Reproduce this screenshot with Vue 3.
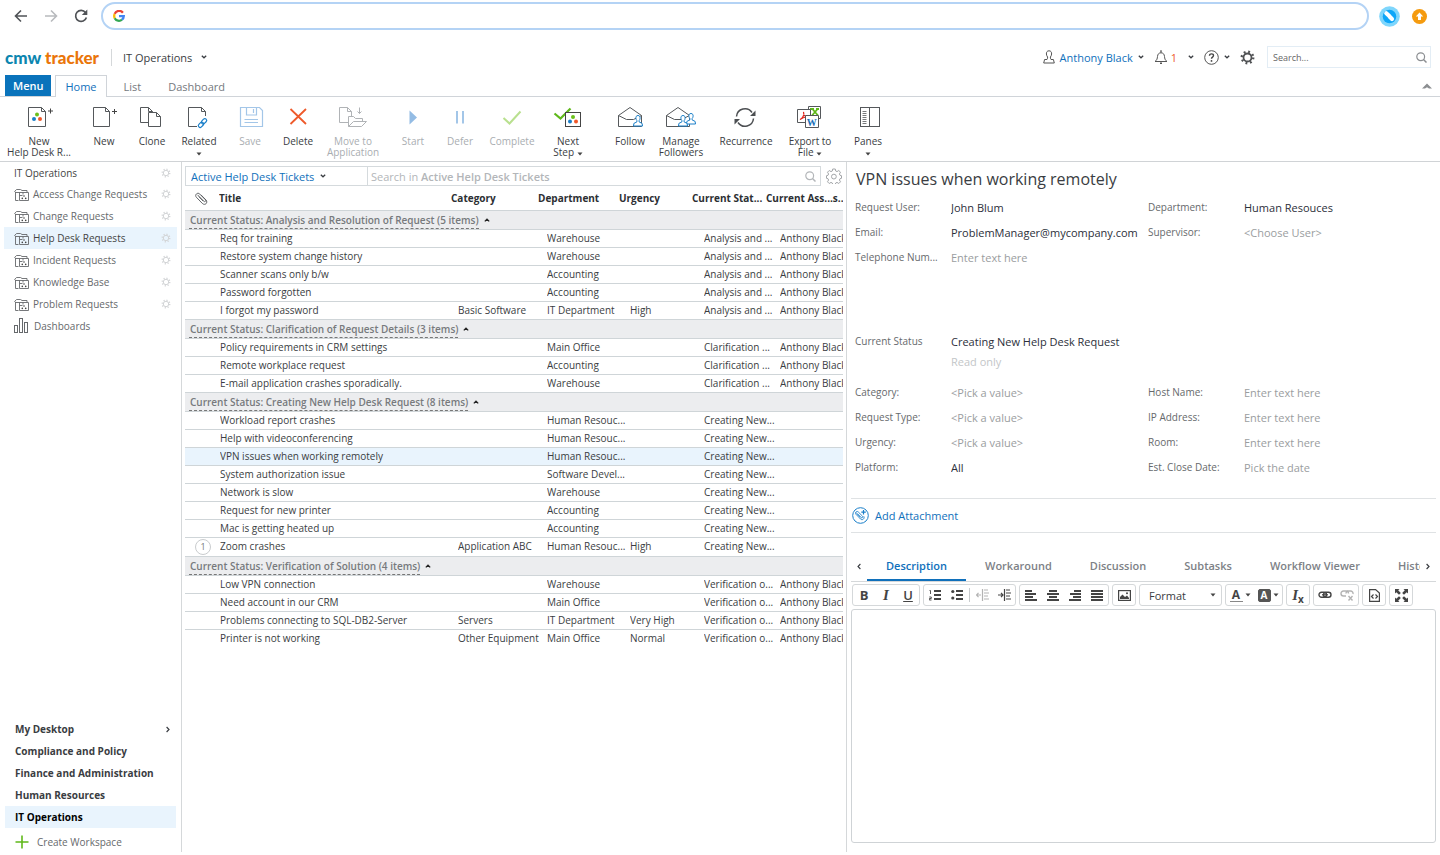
<template>
  <div class="page">
    <!-- Browser bar -->
    <div class="browser">
      <button class="plain nav" aria-label="Back"><Icon name="back" /></button>
      <button class="plain nav muted" aria-label="Forward"><Icon name="forward" /></button>
      <button class="plain nav" aria-label="Reload"><Icon name="reload" /></button>
      <div class="address">
        <Icon name="google" />
        <input v-model="address" type="text" aria-label="Address" />
      </div>
      <button class="plain ext" aria-label="Extension"><Icon name="extension" /></button>
      <button class="plain ext" aria-label="Update"><Icon name="update" /></button>
    </div>

    <!-- Header -->
    <header class="header">
      <a href="#" class="logo"><span class="logo-cmw">cmw</span> <span class="logo-tracker">tracker</span></a>
      <button class="plain workspace-menu">IT Operations <Icon name="down" /></button>
      <div class="account">
        <button class="plain user"><Icon name="user" /><span>Anthony Black</span><Icon name="down" /></button>
        <button class="plain bell"><Icon name="bell" /><span>1</span><Icon name="down" /></button>
        <button class="plain help" aria-label="Help"><Icon name="help" /><Icon name="down" /></button>
        <button class="plain settings" aria-label="Settings"><Icon name="gearDark" /></button>
        <div class="global-search">
          <input v-model="search" type="text" placeholder="Search..." aria-label="Search" />
          <Icon name="search" />
        </div>
      </div>
    </header>

    <nav class="tabs">
      <button class="plain tab-menu">Menu</button>
      <button
        v-for="tab in mainTabs"
        :key="tab"
        class="plain tab"
        :class="{ active: tab === activeTab }"
        @click="activeTab = tab"
      >{{ tab }}</button>
      <button class="plain collapse" aria-label="Collapse"><Icon name="collapse" /></button>
    </nav>

    <!-- Ribbon -->
    <div class="ribbon">
      <button v-for="item in ribbon" :key="item.icon" class="plain ribbon-item" :disabled="item.disabled">
        <Icon :name="item.icon" />
        <span>{{ item.label }}</span>
        <span v-if="item.label2 || item.arrow">{{ item.label2 }} <Icon v-if="item.arrow" name="caret" /></span>
      </button>
    </div>

    <div class="body">
      <!-- Sidebar -->
      <aside class="sidebar">
        <div class="side-list">
          <div class="side-row root">
            <a href="#">IT Operations</a>
            <Icon name="gearLight" />
          </div>
          <div v-for="app in apps" :key="app" class="side-row" :class="{ selected: app === 'Help Desk Requests' }">
            <a href="#"><Icon name="folder" />{{ app }}</a>
            <Icon name="gearLight" />
          </div>
          <div class="side-row dash">
            <a href="#"><Icon name="bars" />Dashboards</a>
          </div>
        </div>
        <div class="workspaces">
          <a v-for="(w, index) in workspaces" :key="w" href="#" :class="{ selected: w === 'IT Operations' }">
            {{ w }} <Icon v-if="index === 0" name="right" />
          </a>
          <button class="plain create"><Icon name="plus" />Create Workspace</button>
        </div>
      </aside>

      <!-- Ticket list -->
      <main class="list">
        <div class="list-bar">
          <div class="list-box">
            <div class="view-pick">
              <select v-model="view" aria-label="View">
                <option>Active Help Desk Tickets</option>
              </select>
              <Icon name="down" />
            </div>
            <div class="list-search">
              <label for="listSearch">Search in <b>Active Help Desk Tickets</b></label>
              <input id="listSearch" v-model="listSearch" type="text" />
              <Icon name="search" />
            </div>
          </div>
          <button class="plain" aria-label="List settings"><Icon name="cog" /></button>
        </div>

        <table>
          <thead>
            <tr>
              <th><Icon name="clip" /></th>
              <th v-for="c in columns" :key="c">{{ c }}</th>
            </tr>
          </thead>
          <tbody v-for="group in groups" :key="group.name">
            <tr class="group">
              <td colspan="7">
                <button class="plain">Current Status: {{ group.name }} ({{ group.rows.length }} items)</button>
                <Icon name="up" />
              </td>
            </tr>
            <tr v-for="row in group.rows" :key="row[0]" :class="{ selected: row[0] === selected, counted: row[5] }" @click="selected = row[0]">
              <td><span v-if="row[5]" class="count">{{ row[5] }}</span></td>
              <td>{{ row[0] }}</td>
              <td>{{ row[1] }}</td>
              <td>{{ row[2] }}</td>
              <td>{{ row[3] }}</td>
              <td>{{ group.status }}</td>
              <td>{{ row[4] }}</td>
            </tr>
          </tbody>
        </table>
      </main>

      <!-- Ticket details -->
      <section class="details">
        <h1>VPN issues when working remotely</h1>
        <div v-for="(block, i) in fields" :key="i" class="fields">
          <div v-for="f in block" :key="f.id" class="field" :class="{ whole: f.whole }">
            <label :for="f.id">{{ f.label }}</label>
            <div>
              <select v-if="f.type === 'select'" :id="f.id" v-model="f.value" :class="{ empty: f.value.startsWith('<') }">
                <option>{{ f.value }}</option>
              </select>
              <input v-else :id="f.id" v-model="f.value" type="text" :placeholder="f.hint" :readonly="f.readonly" />
              <small v-if="f.readonly">Read only</small>
            </div>
          </div>
        </div>

        <div class="attach">
          <button class="plain"><Icon name="attach" />Add Attachment</button>
        </div>

        <div class="detail-tabs">
          <button class="plain arrow" aria-label="Previous"><Icon name="left" /></button>
          <div class="detail-strip">
            <button
              v-for="tab in detailTabs"
              :key="tab"
              class="plain"
              :class="{ active: tab === detailTab }"
              @click="detailTab = tab"
            >{{ tab }}</button>
          </div>
          <button class="plain arrow" aria-label="Next"><Icon name="right" /></button>
        </div>

        <div class="toolbar">
          <div class="tools">
            <button class="plain bold" aria-label="Bold">B</button>
            <button class="plain italic" aria-label="Italic">I</button>
            <button class="plain underline" aria-label="Underline">U</button>
          </div>
          <div class="tools">
            <button class="plain" aria-label="Numbered list"><Icon name="ol" /></button>
            <button class="plain" aria-label="Bulleted list"><Icon name="ul" /></button>
            <i class="sep"></i>
            <button class="plain faded" aria-label="Outdent"><Icon name="outdent" /></button>
            <button class="plain" aria-label="Indent"><Icon name="indent" /></button>
          </div>
          <div class="tools">
            <button class="plain" aria-label="Align left"><Icon name="alignLeft" /></button>
            <button class="plain" aria-label="Center"><Icon name="alignCenter" /></button>
            <button class="plain" aria-label="Align right"><Icon name="alignRight" /></button>
            <button class="plain" aria-label="Justify"><Icon name="justify" /></button>
          </div>
          <div class="tools">
            <button class="plain" aria-label="Image"><Icon name="image" /></button>
          </div>
          <div class="tools format">
            <select v-model="format" aria-label="Format">
              <option>Format</option>
            </select>
            <Icon name="caret" />
          </div>
          <div class="tools colors">
            <button class="plain" aria-label="Text color"><span class="color-a">A</span><Icon name="caret" /></button>
            <button class="plain" aria-label="Background color"><span class="color-bg">A</span><Icon name="caret" /></button>
          </div>
          <div class="tools">
            <button class="plain clear" aria-label="Remove format"><em>I</em><sub>x</sub></button>
          </div>
          <div class="tools">
            <button class="plain" aria-label="Link"><Icon name="link" /></button>
            <button class="plain faded" aria-label="Unlink"><Icon name="unlink" /></button>
          </div>
          <div class="tools">
            <button class="plain" aria-label="Source"><Icon name="source" /></button>
          </div>
          <div class="tools">
            <button class="plain" aria-label="Maximize"><Icon name="maximize" /></button>
          </div>
        </div>
        <textarea v-model="description" class="editor" aria-label="Description"></textarea>
      </section>
    </div>
  </div>
</template>

<script setup>
import { h, ref } from 'vue';

const person = (x, y) =>
  `<path transform="translate(${x} ${y})" fill="#fff" stroke="#1a7fc9" stroke-linejoin="round" d="M5 .5C3.3.5 2.8 1.8 2.9 3.2c.1 1 .5 1.9 1 2.4v1.3L.9 8.4.5 11h9l-.4-2.6-3-1.5V5.6c.5-.5.9-1.4 1-2.4C7.2 1.8 6.7.5 5 .5z"/>`;
const envelope = (x) =>
  `<g transform="translate(${x} 0)" fill="none" stroke="#55585b"><path d="M.5 21.5V10.5L12 2.5l11.500 8v11z"/><path d="M.5 10.500l8 4h7l8-4"/></g>`;
const dots = (x, y) =>
  `<circle cx="${x}" cy="${y}" r="2" fill="#6cc01c"/><circle cx="${x - 3}" cy="${y + 4.5}" r="2" fill="#1a7fc9"/><circle cx="${x + 3}" cy="${y + 4.5}" r="2" fill="#f0582a"/>`;
const page = (x, y, w, ht) =>
  `<path fill="#fff" d="M${x} ${y}h${w - 4}l4 4v${ht - 4}h-${w}z"/><path fill="none" d="M${x + w - 4} ${y}v4h4"/>`;
const lines = (list) => list.map(([x, y, w]) => `<rect x="${x}" y="${y}" width="${w}" height="2"/>`).join('');
const gear = (c, r, color, w) =>
  `<circle cx="${c}" cy="${c}" r="${r}" fill="none" stroke="${color}" stroke-width="${w}"/><circle cx="${c}" cy="${c}" r="${r + w}" fill="none" stroke="${color}" stroke-width="${w + 0.5}" stroke-dasharray="${(((r + w) * Math.PI) / 8) * 0.8} ${(((r + w) * Math.PI) / 8) * 1.2}"/>`;

// [width, height, content]
const icons = {
  back: [14, 14, '<path d="M13 7H2M7 1.500L1.500 7 7 12.500" fill="none" stroke="currentColor" stroke-width="1.600"/>'],
  forward: [14, 14, '<path d="M1 7h11M7 1.500L12.500 7 7 12.500" fill="none" stroke="currentColor" stroke-width="1.600"/>'],
  reload: [14, 14, '<path d="M11.500 3.500A5.500 5.500 0 1 0 12.400 8.500" fill="none" stroke="currentColor" stroke-width="1.700"/><path d="M13.300.5V6H7.800z" fill="currentColor"/>'],
  google: [12, 12, '<g fill="none" stroke-width="2.300"><path d="M9.900 2.700A4.800 4.800 0 0 0 1.700 3.900" stroke="#ea4335"/><path d="M1.700 3.900a4.800 4.800 0 0 0 0 4.300" stroke="#fbbc05"/><path d="M1.700 8.200a4.800 4.800 0 0 0 7.300 1.500" stroke="#34a853"/><path d="M6 6.100h4.800A4.700 4.700 0 0 1 9 9.700" stroke="#4285f4"/></g>'],
  extension: [21, 21, '<circle cx="10.500" cy="10.500" r="10.300" fill="#7fd6fc"/><circle cx="10.500" cy="10.500" r="6.800" fill="#0da6f8"/><path d="M7.300 7.300l3 2.700M10.500 10.500l2.500 2.500" stroke="#fff" stroke-width="4.200" stroke-linecap="round"/>'],
  update: [15, 15, '<circle cx="7.500" cy="7.500" r="7.500" fill="#f59b0f"/><path d="M7.500 3.500L11.200 7.500H9v3.500H6V7.500H3.800z" fill="#fff"/>'],
  down: [6, 4, '<path d="M.8.8L3 2.800 5.200.8" fill="none" stroke="currentColor" stroke-width="1.300"/>'],
  up: [6, 4, '<path d="M.8 3.400L3 1.200l2.200 2.200" fill="none" stroke="#222" stroke-width="1.300"/>'],
  left: [4, 7, '<path d="M3.400 1L1 3.500l2.400 2.500" fill="none" stroke="currentColor" stroke-width="1.100"/>'],
  right: [4, 7, '<path d="M.6 1L3 3.500.6 6" fill="none" stroke="currentColor" stroke-width="1.200"/>'],
  caret: [6, 4, '<path d="M.5.5h5L3 3.500z" fill="#444"/>'],
  collapse: [10, 6, '<path d="M0 5.500L5 .5l5 5H7L5 4.200 3 5.500z" fill="#8b8e91"/>'],
  user: [12, 14, '<path d="M6 .8C4 .8 3.300 2.300 3.400 4c.1 1.300.6 2.300 1.200 3 .1.800 0 1.700-.6 2.500H1.600L.7 13h10.600l-.9-3.500H8c-.6-.8-.7-1.700-.6-2.500.6-.7 1.100-1.700 1.200-3C8.700 2.300 8 .8 6 .8z" fill="none" stroke="#555"/>'],
  bell: [14, 14, '<path d="M1 11.500h12c-2-1.300-2.300-3-2.500-5C10.300 4 9 2.800 7 2.800S3.700 4 3.500 6.500c-.2 2-.5 3.700-2.500 5z" fill="none" stroke="#555"/><path d="M7 .3v2.200M6 13.300h2" stroke="#555" stroke-width="1.400"/>'],
  help: [15, 15, '<circle cx="7.500" cy="7.500" r="6.800" fill="none" stroke="#555"/><path d="M5.500 5.800c0-2.600 4-2.400 4-.2 0 1.500-2 1.500-2 3.200" fill="none" stroke="#444" stroke-width="1.400"/><circle cx="7.500" cy="10.900" r=".9" fill="#444"/>'],
  gearDark: [15, 15, gear(7.5, 4, '#505254', 1.8)],
  gearLight: [10, 10, gear(5, 2.7, '#d3d5d7', 1)],
  cog: [16, 16, '<path d="M6.700 1h2.600l.4 2 1.300.6 1.800-1.100 1.700 1.700-1.100 1.800.6 1.300 1.500.4v2.600l-1.500.4-.6 1.300 1.100 1.800-1.700 1.700-1.800-1.100-1.300.6-.4 1.500H6.700l-.4-1.500-1.300-.6-1.800 1.100-1.700-1.700L2.600 12 2 10.700l-1.500-.4V7.700L2 7.300 2.600 6 1.500 4.200l1.700-1.700L5 3.600 6.300 3z" fill="none" stroke="#a3a6a9"/><circle cx="7.900" cy="8.600" r="2.400" fill="none" stroke="#a3a6a9"/>'],
  search: [11, 11, '<circle cx="4.700" cy="4.700" r="3.900" fill="none" stroke="currentColor" stroke-width="1.200"/><path d="M7.500 7.500l3 3" stroke="currentColor" stroke-width="1.500"/>'],
  folder: [15, 13, '<path d="M4.500 12.500h-3v-8.500L.6 3.500 2.500 1.500h4l1.500 1h5v2M1.500 4.500h13v8h-9v-8M9 4.500v2M5.500 7.500h3" fill="none" stroke="#66696c" stroke-width=".9"/><circle cx="10" cy="8" r=".8"/><circle cx="8.300" cy="10.400" r=".8"/><circle cx="11.700" cy="10.400" r=".8"/>'],
  bars: [14, 15, '<g fill="none" stroke="#66696c"><rect x=".5" y="7.500" width="3" height="7"/><rect x="5.500" y=".5" width="3" height="14"/><rect x="10.500" y="4.500" width="3" height="10"/></g>'],
  plus: [14, 14, '<path d="M7 .5v13M.5 7h13" stroke="#5fb81a" stroke-width="1.600"/>'],
  clip: [13, 13, '<path d="M2.500 2.800l6.200 6.400c1.200 1.200 2.800-.3 1.600-1.500L4.800 2.100C3-.2-.8 2.600 1.300 5.200l6 6.200c2.800 2.600 6-.7 3.700-3.400L6 2.900M3.800 4.600l4.500 4.600" fill="none" stroke="#55585b" stroke-width=".9"/>'],
  attach: [17, 17, '<circle cx="8.500" cy="8.500" r="7.800" fill="none" stroke="#1a7fc9" stroke-width="1"/><path d="M4 5.500l5 5c1 1 2.500-.2 1.500-1.300L6.300 5C5 3.500 2.500 5.500 4 7.300l4.500 4.700c2 1.800 4.500-.5 3.300-2.700M5.500 7l3 3.200" fill="none" stroke="#1a7fc9" stroke-width=".9"/><path d="M11.500 3v4.500M9.300 5.200h4.500" stroke="#1a7fc9" stroke-width="1.200"/>'],
  newTicket: [40, 26, `<g stroke="#55585b">${page(9.5, 2.5, 17, 19)}</g><path d="M31.500 3.500v5M29 6h5" stroke="#444"/>${dots(18, 9.5)}`],
  newItem: [40, 26, `<g stroke="#55585b">${page(9.5, 2.5, 16, 19)}</g><path d="M30.500 4v5M28 6.500h5" stroke="#444"/>`],
  clone: [40, 26, `<g stroke="#55585b">${page(8.5, 2.5, 12, 15)}${page(16.5, 7.5, 12, 14)}</g>`],
  related: [40, 26, '<path d="M18 21.500H9.500v-19h13l4 4V11M22.500 2.500v4h4" fill="none" stroke="#55585b"/><g fill="none" stroke="#1a7fc9" stroke-width="1.200"><rect x="22" y="14.500" width="6" height="3.600" rx="1.800" transform="rotate(-45 25 16.300)"/><rect x="19" y="18" width="6" height="3.600" rx="1.800" transform="rotate(-45 22 19.800)"/></g>'],
  save: [40, 26, '<g fill="none" stroke="#a3c6e8" stroke-width="1.200"><path d="M10.500 2.500h19l3 3v16h-22zM16.500 2.500v7.500h10V2.500M23.500 4v4"/><path d="M14.500 14.500h13.500M14.500 17.500h13.500"/></g>'],
  remove: [40, 26, '<path d="M12.500 4l15.500 15M28 4L12.500 19" stroke="#ee5a2b" stroke-width="1.800"/>'],
  move: [40, 26, `<g stroke="#b0b3b6">${page(6.5, 2.5, 12, 15)}<path d="M15.500 21.500V11.500h5l2 2h7v3.500M15.500 21.500l5-5h13l-5 5z" fill="#fff"/><path d="M26.500 2.500v6M24.500 6.500l2 2 2-2" fill="none"/></g>`],
  start: [40, 26, '<path d="M16.500 5.500l7.500 7-7.500 7z" fill="#94bce4"/>'],
  defer: [40, 26, '<path d="M17 6v12.500M23 6v12.500" stroke="#a3c6e8" stroke-width="2"/>'],
  complete: [40, 26, '<path d="M11.500 13l6 5.500L28.500 6.500" fill="none" stroke="#b9e08f" stroke-width="2"/>'],
  next: [40, 26, `<path d="M6.500 8.500l6 5 10-10" fill="none" stroke="#5fb81a" stroke-width="2.200"/><rect x="17.500" y="7.500" width="15" height="14" fill="#fff" stroke="#444"/>${dots(25, 12)}`],
  follow: [40, 26, envelope(8) + person(23, 10)],
  manage: [40, 26, envelope(5) + person(25, 8) + person(17, 10)],
  recurrence: [40, 26, '<g fill="none" stroke="#4c4f52" stroke-width="1.500"><path d="M10.500 11.500a8.500 8.500 0 0 1 15.500-4"/><path d="M27.500 13.500a8.500 8.500 0 0 1-15.500 4"/></g><path d="M29.500 5.500v5.500h-5.500zM8.500 19.500V14h5.500z" fill="#4c4f52"/>'],
  exportFile: [40, 26, '<g fill="#fff" stroke="#55585b"><path d="M18.500 1.500h12v12h-12z"/><path d="M22 3.500l6 7M28 3.500l-6 7M20 4h4M26 4h3" stroke="#5fb81a" stroke-width="1.800"/><path d="M7.500 4.500h13v13h-13z"/><path d="M10 14.500c3-1 4.500-5 3.500-7.500 0 3 2 5 5 5-3 0-6 .5-8.500 2.500z" stroke="#e2231a" stroke-width="1.200"/><path d="M15.500 10.500h13v12h-13z"/></g><text x="16.800" y="20.500" font-family="Liberation Serif, serif" font-weight="bold" font-size="10" fill="#1a6fb9">W</text>'],
  panes: [40, 26, '<g fill="none" stroke="#55585b"><rect x="12.500" y="2.500" width="19" height="19"/><path d="M21.500 2.500v19"/><path d="M14.500 6.500h4M14.500 8.500h4M14.500 10.500h4M14.500 12.500h4M14.500 14.500h4M14.500 16.500h4M14.500 18.500h4" stroke-width=".8"/></g>'],
  ol: [12, 12, `${lines([[5, 1, 7], [5, 5, 7], [5, 9, 7]])}<path d="M.5 1.500h1V5M.3 8h2v1.500h-2V11h2.200" fill="none" stroke="#444" stroke-width=".9"/>`],
  ul: [12, 12, `${lines([[5, 1, 7], [5, 5, 7], [5, 9, 7]])}<circle cx="1.800" cy="2.500" r="1.600"/><circle cx="1.800" cy="9" r="1.600"/>`],
  outdent: [13, 12, '<path d="M8 1h4M8 4h5M8 7h4M8 10h5M6.500 0v12M0 6h5M2.500 3.800L.5 6l2 2.200" fill="none" stroke="#444" stroke-width="1.200"/>'],
  indent: [13, 12, '<path d="M8 1h4M8 4h5M8 7h4M8 10h5M6.500 0v12M0 6h5M3 3.800L5 6 3 8.200" fill="none" stroke="#444" stroke-width="1.200"/>'],
  alignLeft: [12, 11, lines([[0, 0, 7], [0, 3, 11], [0, 6, 8], [0, 9, 12]])],
  alignCenter: [12, 11, lines([[2, 0, 8], [0, 3, 12], [2, 6, 8], [0, 9, 12]])],
  alignRight: [12, 11, lines([[5, 0, 7], [1, 3, 11], [4, 6, 8], [0, 9, 12]])],
  justify: [12, 11, lines([[0, 0, 12], [0, 3, 12], [0, 6, 12], [0, 9, 12]])],
  image: [13, 11, '<rect x=".6" y=".6" width="11.800" height="9.800" fill="none" stroke="#444" stroke-width="1.200"/><path d="M2 9V7l2.500-2.500L7 7l2-1.500L11 8v1z"/><circle cx="9" cy="3.300" r="1"/>'],
  link: [14, 8, '<g fill="none" stroke="#444" stroke-width="1.400"><rect x="1" y="1.300" width="7.500" height="5" rx="2.500"/><rect x="5.500" y="1.300" width="7.500" height="5" rx="2.500"/></g><path d="M4 3.800h6" stroke="#444" stroke-width="1.200"/>'],
  unlink: [14, 11, '<g fill="none" stroke="#444" stroke-width="1.400"><path d="M8.500 3.500A2.500 2.500 0 0 0 6 1H3.500a2.500 2.500 0 0 0 0 5H6M6 3.500A2.500 2.500 0 0 1 8.500 1h2a2.500 2.500 0 0 1 2.500 3"/><path d="M8.500 6l4 4.500M12.500 6l-4 4.500"/></g>'],
  source: [11, 13, '<path d="M.6.6h6L10.400 4v8.400H.6z" fill="none" stroke="#444" stroke-width="1.200"/><path d="M4.500 5.500l-2 2 2 2M6.500 5.500l2 2-2 2" fill="none" stroke="#444" stroke-width="1.200"/>'],
  maximize: [13, 13, '<path d="M0 0h4.500L3.200 1.300 5.800 4 4 5.800 1.300 3.200 0 4.500zM13 0v4.500l-1.300-1.300L9 5.800 7.200 4l2.600-2.700L8.500 0zM0 13V8.500l1.300 1.300L4 7.200 5.800 9l-2.600 2.700L4.500 13zM13 13H8.500l1.300-1.300L7.200 9 9 7.200l2.700 2.600L13 8.500z"/>'],
};

const Icon = ({ name }) => {
  const [w, ht, content] = icons[name];
  return h('svg', {
    class: 'icon',
    width: w,
    height: ht,
    viewBox: `0 0 ${w} ${ht}`,
    fill: '#444',
    'aria-hidden': 'true',
    innerHTML: content,
  });
};
Icon.props = ['name'];

const address = ref('');
const search = ref('');
const listSearch = ref('');
const view = ref('Active Help Desk Tickets');
const format = ref('Format');
const description = ref('');
const activeTab = ref('Home');
const detailTab = ref('Description');
const selected = ref('VPN issues when working remotely');

const mainTabs = ['Home', 'List', 'Dashboard'];
const detailTabs = ['Description', 'Workaround', 'Discussion', 'Subtasks', 'Workflow Viewer', 'History'];

const ribbon = [
  { icon: 'newTicket', label: 'New', label2: 'Help Desk R...' },
  { icon: 'newItem', label: 'New' },
  { icon: 'clone', label: 'Clone' },
  { icon: 'related', label: 'Related', arrow: true },
  { icon: 'save', label: 'Save', disabled: true },
  { icon: 'remove', label: 'Delete' },
  { icon: 'move', label: 'Move to', label2: 'Application', disabled: true },
  { icon: 'start', label: 'Start', disabled: true },
  { icon: 'defer', label: 'Defer', disabled: true },
  { icon: 'complete', label: 'Complete', disabled: true },
  { icon: 'next', label: 'Next', label2: 'Step', arrow: true },
  { icon: 'follow', label: 'Follow' },
  { icon: 'manage', label: 'Manage', label2: 'Followers' },
  { icon: 'recurrence', label: 'Recurrence' },
  { icon: 'exportFile', label: 'Export to', label2: 'File', arrow: true },
  { icon: 'panes', label: 'Panes', arrow: true },
];

const apps = [
  'Access Change Requests',
  'Change Requests',
  'Help Desk Requests',
  'Incident Requests',
  'Knowledge Base',
  'Problem Requests',
];

const workspaces = ['My Desktop', 'Compliance and Policy', 'Finance and Administration', 'Human Resources', 'IT Operations'];

const columns = ['Title', 'Category', 'Department', 'Urgency', 'Current Stat...', 'Current Ass...s..'];

// title, category, department, urgency, assignee, attachments
const groups = [
  {
    name: 'Analysis and Resolution of Request',
    status: 'Analysis and ...',
    rows: [
      ['Req for training', '', 'Warehouse', '', 'Anthony Black'],
      ['Restore system change history', '', 'Warehouse', '', 'Anthony Black'],
      ['Scanner scans only b/w', '', 'Accounting', '', 'Anthony Black'],
      ['Password forgotten', '', 'Accounting', '', 'Anthony Black'],
      ['I forgot my password', 'Basic Software', 'IT Department', 'High', 'Anthony Black'],
    ],
  },
  {
    name: 'Clarification of Request Details',
    status: 'Clarification ...',
    rows: [
      ['Policy requirements in CRM settings', '', 'Main Office', '', 'Anthony Black'],
      ['Remote workplace request', '', 'Accounting', '', 'Anthony Black'],
      ['E-mail application crashes sporadically.', '', 'Warehouse', '', 'Anthony Black'],
    ],
  },
  {
    name: 'Creating New Help Desk Request',
    status: 'Creating New...',
    rows: [
      ['Workload report crashes', '', 'Human Resouc...', '', ''],
      ['Help with videoconferencing', '', 'Human Resouc...', '', ''],
      ['VPN issues when working remotely', '', 'Human Resouc...', '', ''],
      ['System authorization issue', '', 'Software Devel...', '', ''],
      ['Network is slow', '', 'Warehouse', '', ''],
      ['Request for new printer', '', 'Accounting', '', ''],
      ['Mac is getting heated up', '', 'Accounting', '', ''],
      ['Zoom crashes', 'Application ABC', 'Human Resouc...', 'High', '', 1],
    ],
  },
  {
    name: 'Verification of Solution',
    status: 'Verification o...',
    rows: [
      ['Low VPN connection', '', 'Warehouse', '', 'Anthony Black'],
      ['Need account in our CRM', '', 'Main Office', '', 'Anthony Black'],
      ['Problems connecting to SQL-DB2-Server', 'Servers', 'IT Department', 'Very High', 'Anthony Black'],
      ['Printer is not working', 'Other Equipment', 'Main Office', 'Normal', 'Anthony Black'],
    ],
  },
];

const fields = ref([
  [
    { id: 'requestUser', label: 'Request User:', value: 'John Blum' },
    { id: 'department', label: 'Department:', value: 'Human Resouces' },
    { id: 'email', label: 'Email:', value: 'ProblemManager@mycompany.com' },
    { id: 'supervisor', label: 'Supervisor:', value: '', hint: '<Choose User>' },
    { id: 'phone', label: 'Telephone Num...', value: '', hint: 'Enter text here' },
  ],
  [{ id: 'status', label: 'Current Status', value: 'Creating New Help Desk Request', readonly: true, whole: true }],
  [
    { id: 'category', label: 'Category:', value: '<Pick a value>', type: 'select' },
    { id: 'host', label: 'Host Name:', value: '', hint: 'Enter text here' },
    { id: 'requestType', label: 'Request Type:', value: '<Pick a value>', type: 'select' },
    { id: 'ip', label: 'IP Address:', value: '', hint: 'Enter text here' },
    { id: 'urgency', label: 'Urgency:', value: '<Pick a value>', type: 'select' },
    { id: 'room', label: 'Room:', value: '', hint: 'Enter text here' },
    { id: 'platform', label: 'Platform:', value: 'All', type: 'select' },
    { id: 'closeDate', label: 'Est. Close Date:', value: '', hint: 'Pick the date' },
  ],
]);
</script>

<style>
body {
  margin: 0;
  background: #fff;
}
</style>

<style scoped>
* {
  box-sizing: border-box;
}

.page {
  display: flex;
  flex-direction: column;
  min-height: 100vh;
  font-family: "Open Sans", "Noto Sans", sans-serif;
  font-size: 10px;
  color: #3a3d42;
}

.plain {
  display: flex;
  align-items: center;
  padding: 0;
  border: 0;
  background: none;
  font: inherit;
  color: inherit;
  cursor: pointer;
  white-space: nowrap;
}

.icon {
  flex: none;
}

input,
select,
textarea {
  min-width: 0;
  padding: 0;
  border: 0;
  outline: 0;
  background: none;
  font: inherit;
  color: inherit;
  appearance: none;
}

a {
  color: inherit;
  text-decoration: none;
}

/* Browser bar */
.browser {
  display: flex;
  align-items: center;
  height: 32px;
  padding: 0 13px 0 14px;
  color: #505357;
}

.nav {
  width: 30px;
  height: 30px;
}

.nav.muted {
  color: #b8babd;
}

.address {
  display: flex;
  flex: 1;
  align-items: center;
  gap: 8px;
  height: 28px;
  margin: 0 9px 0 -3px;
  padding: 0 10px;
  border: 2px solid #b4d3f5;
  border-radius: 14px;
}

.address input {
  flex: 1;
  font-size: 12px;
}

.ext {
  justify-content: center;
  width: 23px;
}

.ext + .ext {
  width: 15px;
  margin-left: 11px;
}

/* Header */
.header {
  display: flex;
  align-items: center;
  height: 43px;
  padding: 7px 9px 0 5px;
}

.logo {
  padding-right: 12px;
  border-right: 1px solid #d5d8da;
  font-family: Lato, sans-serif;
  font-size: 17px;
  line-height: 17px;
  font-weight: 900;
}

.logo-cmw {
  color: #0c86b0;
}

.logo-tracker {
  color: #ea760a;
}

.workspace-menu {
  gap: 9px;
  margin-left: 11px;
  font-size: 11px;
}

.account {
  display: flex;
  align-items: center;
  height: 22px;
  margin-left: auto;
  font-size: 11px;
}

.user {
  gap: 5px;
}

.user span {
  color: #1070bb;
}

.bell {
  gap: 3px;
  margin-left: 10px;
}

.bell span {
  margin-right: 8px;
  color: #ee5a2b;
}

.help {
  gap: 5px;
  margin-left: 10px;
}

.settings {
  margin-left: 10px;
}

.global-search {
  display: flex;
  align-items: center;
  width: 164px;
  height: 22px;
  margin-left: 12px;
  padding: 0 3px 0 5px;
  border: 1px solid #e3edf5;
  font-size: 9px;
  color: #8b8e91;
}

.global-search input {
  flex: 1;
}

.global-search input::placeholder {
  color: #666;
}

/* Tabs */
.tabs {
  display: flex;
  height: 22px;
  padding: 0 8px 0 5px;
  border-bottom: 1px solid #d0d4d9;
  font-size: 11px;
}

.tab-menu {
  height: 21px;
  margin-right: 4px;
  padding: 0 8px;
  background: #0a73bb;
  color: #fff;
  font-weight: 600;
}

.tab {
  height: 22px;
  margin-right: 7px;
  padding: 0 9px;
  border: 1px solid transparent;
  border-bottom: 0;
  color: #75797e;
}

.tab.active {
  border-color: #d0d4d9;
  background: #fff;
  color: #1070bb;
}

.collapse {
  margin-left: auto;
}

/* Ribbon */
.ribbon {
  display: grid;
  grid-template-columns: 78px 52px 44px 50px 52px 44px 66px 54px 40px 64px 48px 76px 26px 104px 24px 92px;
  height: 65px;
  padding-top: 8px;
  border-bottom: 1px solid #d0d3d6;
}

.ribbon-item {
  flex-direction: column;
  align-items: center;
  line-height: 11px;
}

.ribbon-item > .icon {
  margin-bottom: 5px;
}

.ribbon-item:disabled {
  color: #a9adb1;
  cursor: default;
}

/* Body */
.body {
  display: grid;
  flex: 1;
  grid-template-columns: 182px minmax(0, 665fr) minmax(0, 593fr);
  padding-bottom: 3px;
}

/* Sidebar */
.sidebar {
  display: flex;
  flex-direction: column;
  justify-content: space-between;
  padding: 0 4px;
  border-right: 1px solid #d5d8da;
}

.side-row {
  display: flex;
  align-items: center;
  justify-content: space-between;
  height: 22px;
  padding: 0 6px 0 10px;
  color: #66696c;
}

.side-row.root,
.side-row.dash {
  height: 21px;
  color: #444;
}

.side-row.selected {
  background: #e9f4fd;
  color: #444;
}

.side-row a {
  display: flex;
  align-items: center;
  gap: 4px;
}

.side-row.dash a {
  gap: 6px;
  color: #66696c;
}

.workspaces {
  padding: 0 1px;
}

.workspaces a {
  display: flex;
  align-items: center;
  justify-content: space-between;
  height: 22px;
  padding: 0 6px 0 10px;
  font-weight: 700;
  color: #3a3d42;
}

.workspaces a.selected {
  background: #e9f4fd;
  color: #000;
}

.create {
  gap: 8px;
  height: 24px;
  padding: 4px 0 0 10px;
  color: #66696c;
}

/* Ticket list */
.list {
  padding: 4px 3px 0;
  border-right: 1px solid #d5d8da;
}

.list-bar {
  display: flex;
  align-items: center;
  gap: 5px;
  padding-right: 1px;
}

.list-box {
  display: flex;
  flex: 1;
  height: 20px;
  border: 1px solid #d5dadd;
  font-size: 11px;
}

.view-pick {
  display: flex;
  align-items: center;
  gap: 5px;
  width: 182px;
  padding-left: 5px;
  border-right: 1px solid #d5dadd;
}

.view-pick select {
  color: #1070bb;
}

.list-search {
  display: flex;
  flex: 1;
  align-items: center;
  padding: 0 4px 0 3px;
  color: #b3b6b9;
}

.list-search b {
  font-weight: 600;
}

.list-search input {
  flex: 1;
}

table {
  display: block;
  width: 100%;
}

thead,
tbody {
  display: block;
}

tr {
  display: grid;
  grid-template-columns: 35px minmax(0, 1fr) 89px 83px 74px 76px 63px;
  height: 18px;
  border-bottom: 1px solid #cfd5d8;
}

tr.counted {
  height: 19px;
}

thead tr {
  grid-template-columns: 34px minmax(0, 1fr) 87px 81px 73px 74px 77px;
  height: 25px;
}

th,
td {
  padding: 0;
  overflow: hidden;
  line-height: 17px;
  text-align: left;
  white-space: nowrap;
}

th {
  line-height: 24px;
  font-weight: 700;
  color: #2c2f33;
}

th:first-child {
  padding: 6px 0 0 10px;
  line-height: 13px;
}

tbody:last-child tr:last-child {
  border-bottom: 0;
}

tr.selected {
  background: #e9f4fd;
}

tr.group {
  display: block;
  height: 19px;
  background: #ecedef;
}

.group td {
  display: flex;
  align-items: center;
  gap: 5px;
  padding-left: 4px;
}

.group button {
  height: 18px;
  padding: 1px 0 0 1px;
  border-bottom: 1px dashed #777;
  font-weight: 600;
  color: #777a7d;
}

.count {
  display: block;
  width: 16px;
  height: 16px;
  margin: 1px 0 0 10px;
  border: 1px solid #c9ccce;
  border-radius: 8px;
  font-size: 9px;
  line-height: 14px;
  text-align: center;
  color: #777;
}

/* Ticket details */
.details {
  display: flex;
  flex-direction: column;
  padding: 5px 4px 9px;
}

h1 {
  margin: 0 0 3px 5px;
  font-size: 16px;
  line-height: 25px;
  font-weight: 400;
}

.fields {
  display: grid;
  grid-template-columns: 293px minmax(0, 1fr);
  margin-left: 4px;
}

.fields + .fields {
  margin-top: 59px;
}

.fields + .fields + .fields {
  margin-top: 8px;
}

.field {
  display: grid;
  grid-template-columns: 96px minmax(0, 1fr);
  min-height: 25px;
  line-height: 25px;
}

.field.whole {
  grid-column: span 2;
}

.field label {
  color: #66696c;
}

.field input,
.field select {
  display: block;
  width: 100%;
  height: 25px;
  font-size: 11px;
  color: #2c2f3a;
}

.field select.empty,
.field input::placeholder {
  color: #9a9da0;
}

.field small {
  display: block;
  height: 18px;
  font-size: 11px;
  line-height: 16px;
  color: #c3c6c8;
}

.attach {
  margin-top: 18px;
  border: 1px solid #dfe2e4;
  border-width: 1px 0;
}

.attach button {
  gap: 6px;
  height: 33px;
  padding-left: 1px;
  font-size: 11px;
  color: #1070bb;
}

.detail-tabs {
  display: flex;
  height: 31px;
  margin-top: 18px;
  border-bottom: 1px solid #d5d8da;
}

.arrow {
  justify-content: center;
  width: 16px;
}

.detail-strip {
  display: flex;
  flex: 1;
  overflow: hidden;
}

.detail-strip button {
  padding: 0 19px;
  border-bottom: 2px solid transparent;
  font-size: 11px;
  font-weight: 600;
  color: #7d8186;
}

.detail-strip .active {
  border-color: #1070bb;
  color: #1070bb;
}

.toolbar {
  display: flex;
  flex-wrap: wrap;
  gap: 3px;
  padding: 2px 1px 3px;
}

.tools {
  display: flex;
  align-items: center;
  height: 22px;
  border: 1px solid #d5d8da;
  border-radius: 3px;
}

.tools button {
  justify-content: center;
  width: 22px;
  height: 20px;
  font-size: 13px;
  color: #444;
}

.tools .bold {
  font-weight: 700;
}

.tools .italic {
  font-family: "Liberation Serif", serif;
  font-style: italic;
  font-weight: 700;
  font-size: 15px;
}

.tools .underline {
  font-weight: 600;
  text-decoration: underline;
}

.sep {
  width: 1px;
  height: 14px;
  margin: 0 1px;
  background: #c9ccce;
}

.faded {
  opacity: 0.4;
}

.format {
  justify-content: space-between;
  width: 83px;
  padding: 0 5px 0 9px;
  font-size: 11px;
}

.colors button {
  gap: 2px;
  width: 28px;
}

.color-a,
.color-bg {
  width: 13px;
  font-weight: 700;
  font-size: 12px;
  line-height: 13px;
  border-bottom: 1px solid #888;
}

.color-bg {
  border: 1px solid #555;
  border-radius: 2px;
  background: #555;
  color: #fff;
  font-size: 10px;
  line-height: 11px;
}

.clear em {
  font-family: "Liberation Serif", serif;
  font-weight: 700;
  font-size: 15px;
}

.clear sub {
  align-self: flex-end;
  font-size: 10px;
  line-height: 12px;
  font-weight: 700;
}

.editor {
  flex: 1;
  min-height: 120px;
  padding: 8px;
  border: 1px solid #cfd3d6;
  border-radius: 3px;
  font-size: 11px;
  resize: none;
}
</style>
